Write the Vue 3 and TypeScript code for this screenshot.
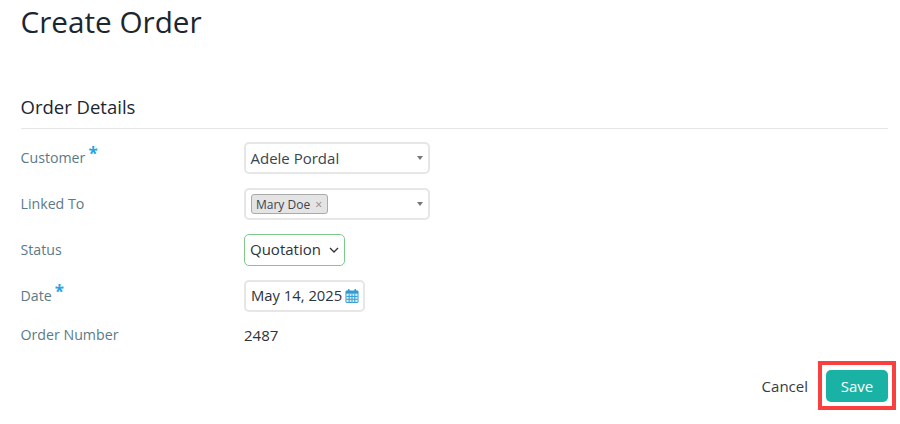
<script setup lang="ts">
interface Row { label: string; required: boolean }
const rows: Record<string, Row> = {
  customer: { label: 'Customer', required: true },
  linked: { label: 'Linked To', required: false },
  status: { label: 'Status', required: false },
  date: { label: 'Date', required: true },
  number: { label: 'Order Number', required: false },
}
</script>

<template>
  <main class="page">
    <h1 class="title">Create Order</h1>
    <h2 class="section">Order Details</h2>
    <div class="form">
      <div class="row">
        <span class="label">{{ rows.customer.label }}<i class="req">*</i></span>
        <div class="control select"><span>Adele Pordal</span><b class="caret"></b></div>
      </div>
      <div class="row">
        <span class="label">{{ rows.linked.label }}</span>
        <div class="control select">
          <span class="tag">Mary Doe<em class="x">×</em></span><b class="caret"></b>
        </div>
      </div>
      <div class="row">
        <span class="label">{{ rows.status.label }}</span>
        <div class="control status">
          <span class="lift">Quotation</span>
          <svg class="chev" width="10" height="6" viewBox="0 0 10 6"><path d="M1 1l4 4 4-4" fill="none" stroke="#333" stroke-width="1.3"/></svg>
        </div>
      </div>
      <div class="row">
        <span class="label">{{ rows.date.label }}<i class="req">*</i></span>
        <div class="control date">
          <span class="lift date-text">May 14, 2025</span>
          <svg class="cal" width="14" height="16" viewBox="0 0 15 16">
            <rect x="0.5" y="2" width="14" height="13.5" rx="1.5" fill="#2f9bd0"/>
            <rect x="3" y="0.5" width="2" height="3" rx="1" fill="#2f9bd0"/>
            <rect x="10" y="0.5" width="2" height="3" rx="1" fill="#2f9bd0"/>
            <rect x="1.5" y="5.5" width="12" height="9" fill="#d5ecf8"/>
            <path d="M1.5 8.5h12M1.5 11.5h12M4.5 5.5v9M7.5 5.5v9M10.5 5.5v9" stroke="#2f9bd0" stroke-width="1"/>
          </svg>
        </div>
      </div>
      <div class="row number">
        <span class="label">{{ rows.number.label }}</span>
        <span class="value">2487</span>
      </div>
    </div>
    <footer class="actions">
      <button class="cancel" type="button">Cancel</button>
      <span class="highlight">
        <button class="save" type="button">Save</button>
      </span>
    </footer>
  </main>
</template>

<style>
html, body { margin: 0; background: #fff; }
</style>

<style scoped>
.page {
  width: 900px;
  height: 424px;
  box-sizing: border-box;
  padding: 0 4px 0 20.5px;
  font-family: "Open Sans", sans-serif;
  overflow: hidden;
}
.title {
  margin: 0;
  padding-top: 3px;
  font-size: 29.7px;
  line-height: 38px;
  font-weight: 400;
  color: #1c2630;
}
.section {
  margin: 0 8px 0 0;
  padding-top: 53px;
  padding-bottom: 8px;
  font-size: 18.5px;
  line-height: 26px;
  font-weight: 400;
  color: #1c2630;
  border-bottom: 1px solid #e6e6e6;
}
.form {
  display: flex;
  flex-direction: column;
  gap: 14px;
  padding-top: 13px;
}
.row {
  display: flex;
  align-items: center;
  height: 32px;
}
.row.number {
  height: 18px;
}
.label {
  width: 223.5px;
  flex: none;
  font-size: 14.2px;
  color: #5b7a88;
  display: flex;
  padding-bottom: 2px;
}
.req {
  font-style: normal;
  font-size: 17px;
  font-weight: 700;
  line-height: 18px;
  color: #2aa3e0;
  margin-left: 3px;
  margin-top: -3px;
}
.control {
  box-sizing: border-box;
  height: 32px;
  display: flex;
  align-items: center;
  border: 2px solid #e6e6e6;
  border-radius: 5px;
  font-size: 15px;
  color: #3a4450;
  padding: 0 5px 0 4.5px;
}
.select {
  width: 186px;
  justify-content: space-between;
}
.caret {
  width: 0;
  height: 0;
  border-left: 3.5px solid transparent;
  border-right: 3.5px solid transparent;
  border-top: 4.5px solid #777;
}
.tag {
  display: inline-flex;
  align-items: center;
  height: 18px;
  padding: 0 4.5px;
  background: #e4e4e4;
  border: 1px solid #aaa;
  border-radius: 3px;
  font-size: 12px;
  color: #3a4450;
}
.x {
  font-style: normal;
  margin-left: 5px;
  color: #888;
}
.status {
  width: 101px;
  border: 1.5px solid #7fca8a;
  color: #2c333a;
  gap: 8px;
  padding-left: 5px;
}
.lift { position: relative; top: -1px; }
.chev { flex: none; }
.date {
  width: 121px;
  gap: 3px;
  color: #2c333a;
  font-size: 14.8px;
  padding-left: 5px;
  padding-right: 0;
}
.date-text { white-space: nowrap; }
.cal { flex: none; margin-top: -1px; }
.value {
  font-size: 15px;
  color: #2c333a;
}
.actions {
  display: flex;
  justify-content: flex-end;
  align-items: center;
  gap: 10px;
  padding-top: 17px;
}
.cancel {
  border: 0;
  background: none;
  padding: 0;
  font: inherit;
  font-size: 15px;
  color: #333c46;
}
.highlight {
  display: flex;
  padding: 5px 4px 4px;
  border: 4px solid #fa3f3f;
}
.save {
  width: 62px;
  height: 32px;
  border: 0;
  border-radius: 5px;
  background: #19b2a4;
  color: #fff;
  font: inherit;
  font-size: 15px;
  font-weight: 500;
}
</style>
